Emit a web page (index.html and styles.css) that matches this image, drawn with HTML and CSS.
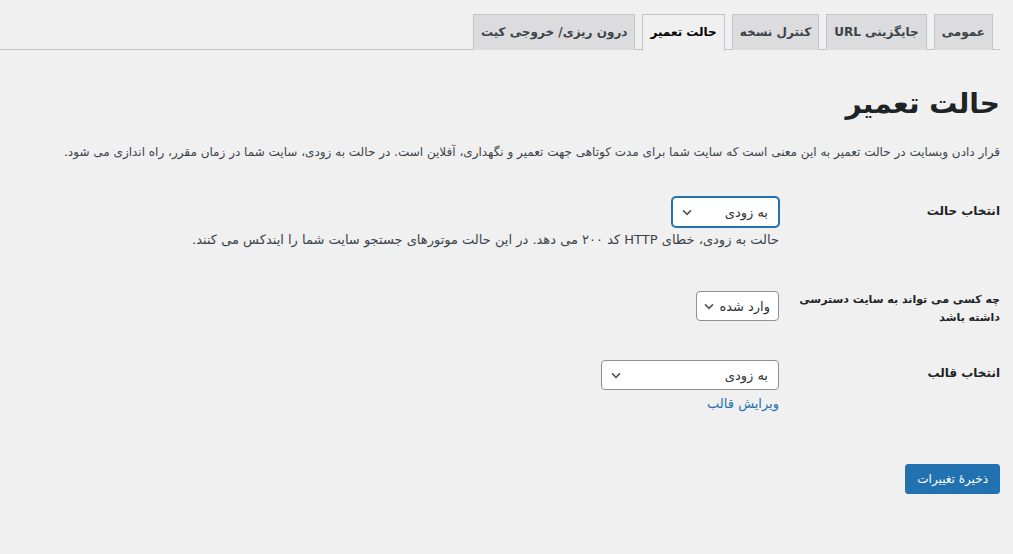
FILE: index.html
```html
<!DOCTYPE html>
<html lang="fa" dir="rtl">
<head>
<meta charset="utf-8">
<title>حالت تعمیر</title>
<link rel="stylesheet" href="styles.css">
</head>
<body>
<div class="wrap">
  <nav class="tabs">
    <a class="tab">عمومی</a>
    <a class="tab">جایگزینی URL</a>
    <a class="tab">کنترل نسخه</a>
    <a class="tab active">حالت تعمیر</a>
    <a class="tab">درون ریزی/ خروجی کیت</a>
  </nav>
  <h1 class="title">حالت تعمیر</h1>
  <p class="intro">قرار دادن وبسایت در حالت تعمیر به این معنی است که سایت شما برای مدت کوتاهی جهت تعمیر و نگهداری، آفلاین است. در حالت به زودی، سایت شما در زمان مقرر، راه اندازی می شود.</p>
  <div class="form">
    <div class="row">
      <div class="label">انتخاب حالت</div>
      <div class="field">
        <div class="select focus w1"><span>به زودی</span><svg viewBox="0 0 20 20" class="chev"><path d="M5 8l5 5 5-5" fill="none" stroke="#50575e" stroke-width="2"/></svg></div>
        <p class="desc">حالت به زودی، خطای HTTP کد ۲۰۰ می دهد. در این حالت موتورهای جستجو سایت شما را ایندکس می کنند.</p>
      </div>
    </div>
    <div class="row r2">
      <div class="label">چه کسی می تواند به سایت دسترسی داشته باشد</div>
      <div class="field">
        <div class="select w2"><span>وارد شده</span><svg viewBox="0 0 20 20" class="chev"><path d="M5 8l5 5 5-5" fill="none" stroke="#50575e" stroke-width="2"/></svg></div>
      </div>
    </div>
    <div class="row r3">
      <div class="label">انتخاب قالب</div>
      <div class="field">
        <div class="select w3"><span>به زودی</span><svg viewBox="0 0 20 20" class="chev"><path d="M5 8l5 5 5-5" fill="none" stroke="#50575e" stroke-width="2"/></svg></div>
        <a class="link">ویرایش قالب</a>
      </div>
    </div>
  </div>
  <div class="submit"><button class="btn">ذخیرهٔ تغییرات</button></div>
</div>
</body>
</html>
```
FILE: styles.css
```css
html, body {
  margin: 0;
  background: #f0f0f1;
}
body {
  direction: rtl;
  font-family: "DejaVu Sans", "Noto Sans", sans-serif;
  color: #1d2327;
  font-size: 13px;
  height: 554px;
}
.wrap {
  padding: 14px 13px 0 0;
}
.tabs {
  display: flex;
  border-bottom: 1px solid #c3c4c7;
  height: 36px;
  box-sizing: border-box;
}
.tab {
  display: block;
  box-sizing: border-box;
  height: 36px;
  margin-right: 7px;
  padding: 6px 7px 0;
  font-size: 12px;
  line-height: 22px;
  font-weight: bold;
  color: #3c434a;
  background: #dcdcde;
  border: 1px solid #c3c4c7;
  border-bottom: none;
  white-space: nowrap;
}
.tab.active {
  background: #f0f0f1;
  color: #000;
  height: 37px;
  margin-bottom: -1px;
}
.title {
  margin: 34px 0 0;
  font-size: 28px;
  line-height: 40px;
  font-weight: bold;
  color: #1d2327;
}
.intro {
  margin: 18px 0 0;
  font-size: 12px;
  line-height: 20px;
  color: #3c434a;
}
.form {
  margin-top: 35px;
}
.row {
  display: flex;
  align-items: flex-start;
}
.label {
  flex: none;
  width: 213px;
  padding-left: 8px;
  font-weight: bold;
  font-size: 12px;
  line-height: 20px;
  padding-top: 4px;
  color: #1d2327;
}
.field {
  display: flex;
  flex-direction: column;
  align-items: flex-start;
}
.select {
  box-sizing: border-box;
  height: 30px;
  display: flex;
  align-items: center;
  justify-content: space-between;
  border: 1px solid #8c8f94;
  border-radius: 4px;
  background: #fff;
  padding: 0 10px 0 6px;
  font-size: 13px;
  color: #2c3338;
  white-space: nowrap;
}
.select.focus {
  border-color: #2271b1;
  box-shadow: 0 0 0 1px #2271b1;
}
.chev { width: 16px; height: 16px; flex: none; }
.w1 { width: 107px; }
.w2 { width: 83px; padding: 0 8px 0 4px; }
.w3 { width: 178px; }
.desc {
  margin: 3px 0 0;
  font-size: 13px;
  line-height: 20px;
  color: #3c434a;
}
.r2 { margin-top: 41px; }
.r2 .label { padding-top: 0; line-height: 18px; font-size: 11px; }
.r3 { margin-top: 33px; }
.r3 .label { padding-top: 3px; }
.link {
  margin-top: 4px;
  color: #2271b1;
  font-size: 13px;
  line-height: 20px;
}
.submit {
  margin-top: 50px;
}
.btn {
  height: 30px;
  padding: 0 11px;
  background: #2271b1;
  border: 1px solid #2271b1;
  border-radius: 3px;
  color: #fff;
  font-family: inherit;
  font-size: 12px;
}
```
